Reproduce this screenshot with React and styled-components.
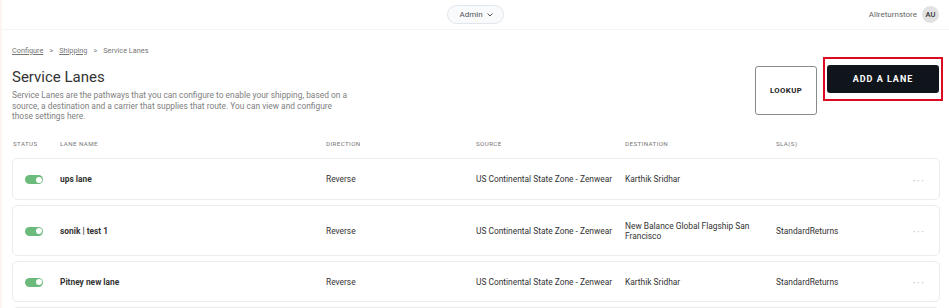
import React from "react";
import styled, { createGlobalStyle } from "styled-components";

const GlobalStyle = createGlobalStyle`
  * { box-sizing: border-box; }
  body {
    margin: 0;
    background: #fff;
    font-family: Roboto, "Liberation Sans", sans-serif;
    color: #333;
  }
`;

// top bar //

const Page = styled.div`
  width: 949px;
  height: 308px;
  overflow: hidden;
  border-left: 2px solid #fdf3f1;
`;

const TopBar = styled.div`
  height: 30px;
  display: grid;
  grid-template-columns: 1fr auto 1fr;
  align-items: center;
  padding: 0 10px 0 12px;
  border-bottom: 1px solid #f3f4f6;
`;

const RolePill = styled.div`
  grid-column: 2;
  height: 19px;
  padding: 0 10px 0 11px;
  display: flex;
  align-items: center;
  gap: 4px;
  font-size: 8px;
  color: #555;
  background: #f8fafc;
  border: 1px solid #e1e6ee;
  border-radius: 10px;
  margin-left: -2px;
`;

const UserBox = styled.div`
  justify-self: end;
  display: flex;
  align-items: center;
  gap: 5px;
  font-size: 8px;
  color: #666;
`;

const Avatar = styled.div`
  width: 17px;
  height: 17px;
  border-radius: 50%;
  background: #e2e2e2;
  color: #333;
  font-size: 7.5px;
  font-weight: 500;
  display: flex;
  align-items: center;
  justify-content: center;
`;

// page head //

const Content = styled.div`
  padding: 0 8px 0 10px;
`;

const Crumbs = styled.div`
  display: flex;
  align-items: center;
  gap: 6px;
  margin-top: 14px;
  height: 12px;
  font-size: 7.3px;
  color: #777;
`;

const CrumbLink = styled.span`
  text-decoration: underline;
  color: #777;
`;

const PageHead = styled.div`
  display: flex;
  justify-content: space-between;
  align-items: flex-start;
  margin-top: 1px;
`;

const HeadText = styled.div`
  padding-top: 10px;
`;

const Title = styled.h1`
  margin: 0;
  font-size: 15px;
  font-weight: 400;
  line-height: 20px;
  color: #333;
`;

const Description = styled.p`
  margin: 3px 0 0;
  width: 338px;
  font-size: 8.4px;
  line-height: 10.5px;
  color: #808080;
`;

const Actions = styled.div`
  display: flex;
  align-items: flex-start;
  gap: 6px;
  margin-right: -2px;
`;

const LookupButton = styled.button`
  margin-top: 9px;
  width: 62px;
  height: 49px;
  background: #fff;
  border: 1px solid #8a8a8a;
  border-radius: 3px;
  font-family: inherit;
  font-size: 7.8px;
  font-weight: 700;
  letter-spacing: 0.4px;
  color: #222;
`;

const Highlight = styled.div`
  border: 2px solid #dc0a22;
  padding: 6px 2px;
`;

const PrimaryButton = styled.button`
  display: block;
  width: 112px;
  height: 28px;
  background: #10151b;
  border: none;
  border-radius: 3px;
  font-family: inherit;
  font-size: 9px;
  font-weight: 700;
  letter-spacing: 1px;
  color: #fff;
`;

// table //

const cols = "47px 266px 150px 149px 151px 1fr 40px";

const HeaderRow = styled.div`
  display: grid;
  grid-template-columns: ${cols};
  padding-left: 1px;
  margin-top: 18px;
  font-size: 6.2px;
  letter-spacing: 0.4px;
  color: #777;
  text-transform: uppercase;
`;

const Rows = styled.div`
  display: flex;
  flex-direction: column;
  gap: 5px;
  margin-top: 10px;
`;

const Card = styled.div`
  display: grid;
  grid-template-columns: ${cols};
  align-items: center;
  min-height: ${(p) => p.h}px;
  width: 928px;
  border: 1px solid #ececec;
  border-radius: 5px;
  font-size: 8.4px;
  color: #333;
`;

const Cell = styled.div`
  padding-right: 6px;
  padding-top: 2px;
  line-height: 10.5px;
  font-weight: ${(p) => (p.bold ? 700 : 400)};
`;

const Toggle = styled.div`
  margin-left: 12px;
  margin-top: 2px;
  width: 18px;
  height: 9px;
  border-radius: 5px;
  background: #6dbb7c;
  position: relative;

  &::after {
    content: "";
    position: absolute;
    right: 1.5px;
    top: 1.5px;
    width: 6px;
    height: 6px;
    border-radius: 50%;
    background: #fff;
  }
`;

const More = styled.div`
  margin-left: 14px;
  padding-top: 5px;
  color: #b4b4b4;
  font-size: 10px;
  letter-spacing: 1.5px;
`;

const lanes = [
  {
    name: "ups lane",
    dir: "Reverse",
    src: "US Continental State Zone - Zenwear",
    dest: "Karthik Sridhar",
    sla: "",
    h: 42,
  },
  {
    name: "sonik | test 1",
    dir: "Reverse",
    src: "US Continental State Zone - Zenwear",
    dest: "New Balance Global Flagship San Francisco",
    sla: "StandardReturns",
    h: 51,
  },
  {
    name: "Pitney new lane",
    dir: "Reverse",
    src: "US Continental State Zone - Zenwear",
    dest: "Karthik Sridhar",
    sla: "StandardReturns",
    h: 41,
  },
  {
    name: "",
    dir: "",
    src: "",
    dest: "",
    sla: "",
    h: 42,
  },
];

function Chevron() {
  return (
    <svg width="6" height="4" viewBox="0 0 6 4" fill="none">
      <path d="M0.8 0.8 L3 3 L5.2 0.8" stroke="#555" strokeWidth="1" strokeLinecap="round" />
    </svg>
  );
}

function App() {
  return (
    <Page>
      <GlobalStyle />
      <TopBar>
        <RolePill>
          Admin <Chevron />
        </RolePill>
        <UserBox>
          Allreturnstore
          <Avatar>AU</Avatar>
        </UserBox>
      </TopBar>

      <Content>
        <Crumbs>
          <CrumbLink>Configure</CrumbLink>
          <span>&gt;</span>
          <CrumbLink>Shipping</CrumbLink>
          <span>&gt;</span>
          <span>Service Lanes</span>
        </Crumbs>

        <PageHead>
          <HeadText>
            <Title>Service Lanes</Title>
            <Description>
              Service Lanes are the pathways that you can configure to enable your shipping, based on a
              source, a destination and a carrier that supplies that route. You can view and configure
              those settings here.
            </Description>
          </HeadText>
          <Actions>
            <LookupButton>LOOKUP</LookupButton>
            <Highlight>
              <PrimaryButton>ADD A LANE</PrimaryButton>
            </Highlight>
          </Actions>
        </PageHead>

        <HeaderRow>
          <div>Status</div>
          <div>Lane Name</div>
          <div>Direction</div>
          <div>Source</div>
          <div>Destination</div>
          <div>SLA(S)</div>
          <div />
        </HeaderRow>

        <Rows>
          {lanes.map((lane, i) => (
            <Card key={i} h={lane.h}>
              {lane.name ? <Toggle /> : <div />}
              <Cell bold>{lane.name}</Cell>
              <Cell>{lane.dir}</Cell>
              <Cell>{lane.src}</Cell>
              <Cell>{lane.dest}</Cell>
              <Cell>{lane.sla}</Cell>
              <More>{lane.name ? "···" : ""}</More>
            </Card>
          ))}
        </Rows>
      </Content>
    </Page>
  );
}

export default App;
